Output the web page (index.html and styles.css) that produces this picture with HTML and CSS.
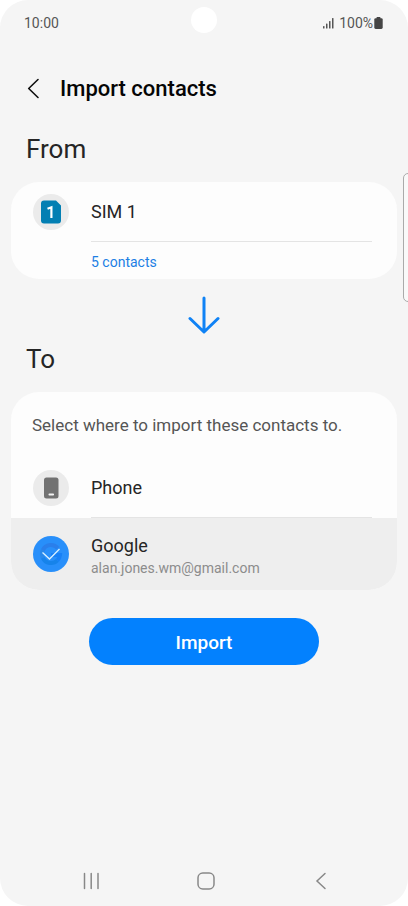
FILE: index.html
```html
<!DOCTYPE html>
<html lang="en">
<head>
<meta charset="utf-8">
<meta name="viewport" content="width=device-width, initial-scale=1">
<title>Import contacts</title>
<link rel="stylesheet" href="styles.css">
</head>
<body>
<div class="screen">
  <div class="status">
    <span>10:00</span>
    <span class="camera"></span>
    <span class="status-right">
      <svg width="12" height="12" viewBox="0 0 12 12" fill="#555"><rect x="0" y="9" width="1.5" height="2.5" rx=".6"/><rect x="3" y="6.500" width="1.500" height="5" rx=".6"/><rect x="6" y="4" width="1.500" height="7.500" rx=".6"/><rect x="9" y="1" width="1.500" height="10.500" rx=".6"/></svg>
      <span>100%</span>
      <svg width="9" height="12" viewBox="0 0 9 12" fill="#454545"><rect x="2.500" y="0" width="4" height="3" rx=".8"/><rect x=".3" y="1.200" width="8.400" height="10.800" rx="1.400"/></svg>
    </span>
  </div>
  <header class="title-bar">
    <button class="icon-button" type="button" aria-label="Back">
      <svg width="14" height="22" viewBox="0 0 14 22" fill="none" stroke="#111" stroke-width="1.600" stroke-linecap="round" stroke-linejoin="round"><path d="M12 1.500 2.700 10.500 12 19.500"/></svg>
    </button>
    <h1>Import contacts</h1>
  </header>
  <main>
    <h2>From</h2>
    <section class="card">
      <div class="row">
        <span class="avatar">
          <svg width="20" height="24" viewBox="0 0 20 24"><path d="M3 .5h12L20 5.500V20.500a3 3 0 0 1-3 3H3a3 3 0 0 1-3-3V3.500a3 3 0 0 1 3-3z" fill="#037fb3"/><path d="M6.500 8.800 10.400 7.300V18" fill="none" stroke="#fff" stroke-width="2.200"/></svg>
        </span>
        <span class="name">SIM 1</span>
      </div>
      <p class="count">5 contacts</p>
    </section>
    <div class="arrow">
      <svg width="32" height="38" viewBox="0 0 32 38" fill="none" stroke="#0f82f5" stroke-width="3" stroke-linecap="round" stroke-linejoin="round"><path d="M16 2V35.500M2 22.500 16 36 30 22.500"/></svg>
    </div>
    <h2>To</h2>
    <section class="card">
      <p class="hint">Select where to import these contacts to.</p>
      <label class="row">
        <input type="radio" name="target">
        <span class="avatar">
          <svg width="16" height="22" viewBox="0 0 16 22"><rect x="1" y=".5" width="14.500" height="21" rx="2.500" fill="#727272"/><rect x="5.500" y="16.500" width="5.500" height="2" rx=".8" fill="#f4f4f4"/></svg>
        </span>
        <span class="name">Phone</span>
      </label>
      <label class="row account">
        <input type="radio" name="target" checked>
        <span class="avatar chosen">
          <svg width="36" height="36" viewBox="0 0 36 36" fill="none" stroke-width="4"><path d="M24.900 12.200A9 9 0 0 0 9.800 14.200" stroke="#2a7feb"/><path d="M9.800 14.200A9 9 0 0 0 9.800 21.800" stroke="#2888ea"/><path d="M9.800 21.800A9 9 0 0 0 24.400 24.400" stroke="#1683ea"/><path d="M24.400 24.400A9 9 0 0 0 27 19H18" stroke="#1780f6"/><path d="M9.500 16.500 16.500 23 26.500 13" stroke="#d9f1ff" stroke-width="1.300"/></svg>
        </span>
        <span class="name">Google<small>alan.jones.wm@gmail.com</small></span>
      </label>
    </section>
    <button class="import" type="button">Import</button>
  </main>
  <nav class="nav">
    <button class="icon-button" type="button" aria-label="Recent apps"><svg width="18" height="18" viewBox="0 0 18 18" stroke="#888" stroke-width="1.500" stroke-linecap="round"><path d="M2.500 1.500v15M9.200 1.500v15M16 1.500v15"/></svg></button>
    <button class="icon-button" type="button" aria-label="Home"><svg width="18" height="18" viewBox="0 0 18 18" fill="none" stroke="#888" stroke-width="1.500"><rect x="1" y="1" width="16" height="16" rx="4.800"/></svg></button>
    <button class="icon-button" type="button" aria-label="Back"><svg width="18" height="18" viewBox="0 0 18 18" fill="none" stroke="#888" stroke-width="1.500" stroke-linecap="round"><path d="M13 1.500 5 9l8 7.500"/></svg></button>
  </nav>
  <span class="edge-handle"></span>
</div>
</body>
</html>
```
FILE: styles.css
```css
* { box-sizing: border-box; }
body { margin: 0; background: #fff; font-family: Roboto, "Liberation Sans", sans-serif; color: #252525; }
h1, h2, p { margin: 0; }
svg { display: block; }
button { border: 0; font: inherit; cursor: pointer; }
.screen { position: relative; display: flex; flex-direction: column; min-height: 100vh; background: #f5f5f5; border-radius: 28px; overflow: hidden; }
.status { display: flex; justify-content: space-between; align-items: center; height: 45px; padding: 0 25px 0 24px; font-size: 14px; color: #555; }
.status-right { display: flex; align-items: center; gap: 4px; }
.status-right span { margin-right: -3px; }
.camera { position: absolute; top: 7px; left: 50%; width: 26px; height: 26px; margin-left: -13px; border-radius: 50%; background: #fff; }
.title-bar { display: flex; align-items: center; gap: 20px; height: 88px; padding: 0 26px; }
.icon-button { display: flex; padding: 0; background: none; }
h1 { font-size: 22px; font-weight: 500; line-height: 28px; color: #050505; }
main { display: flex; flex-direction: column; flex: 1; padding: 0 11px; }
h2 { padding: 0 15px; font-size: 26px; font-weight: 400; line-height: 32px; }
.card { margin-top: 17px; border-radius: 28px; background: #fdfdfd; overflow: hidden; }
.row { display: flex; align-items: center; gap: 22px; height: 60px; padding-left: 22px; }
.row input { position: absolute; opacity: 0; }
.avatar { display: grid; place-items: center; flex: none; width: 36px; height: 36px; border-radius: 50%; background: #ebebeb; }
.chosen { background: #288ffa; }
.name { display: flex; flex-direction: column; justify-content: center; align-self: stretch; flex: 1; margin-right: 25px; border-bottom: 1px solid #e4e4e4; font-size: 18px; line-height: 24px; }
.name small { font-size: 14px; line-height: 20px; color: #8c8c8c; }
.account { height: 72px; background: #eee; }
.account .name { padding-top: 3px; border: 0; }
.count { padding: 3px 0 0 80px; font-size: 14px; line-height: 34px; color: #1c7fe4; }
.arrow { display: flex; justify-content: center; padding: 17px 0 9px; }
.hint { padding: 21px; font-size: 17px; line-height: 24px; color: #555; }
.import { align-self: center; width: 230px; max-width: 100%; height: 47px; margin-top: 28px; padding-top: 2px; border-radius: 24px; background: #0381fe; color: #fff; font-size: 19px; font-weight: 500; }
.nav { display: flex; justify-content: space-between; padding: 16px 78px 16px 82px; }
.edge-handle { position: absolute; top: 173px; right: -6px; width: 11px; height: 129px; border: 1px solid #aaa; border-radius: 5px; background: #f9f9f9; }
```
